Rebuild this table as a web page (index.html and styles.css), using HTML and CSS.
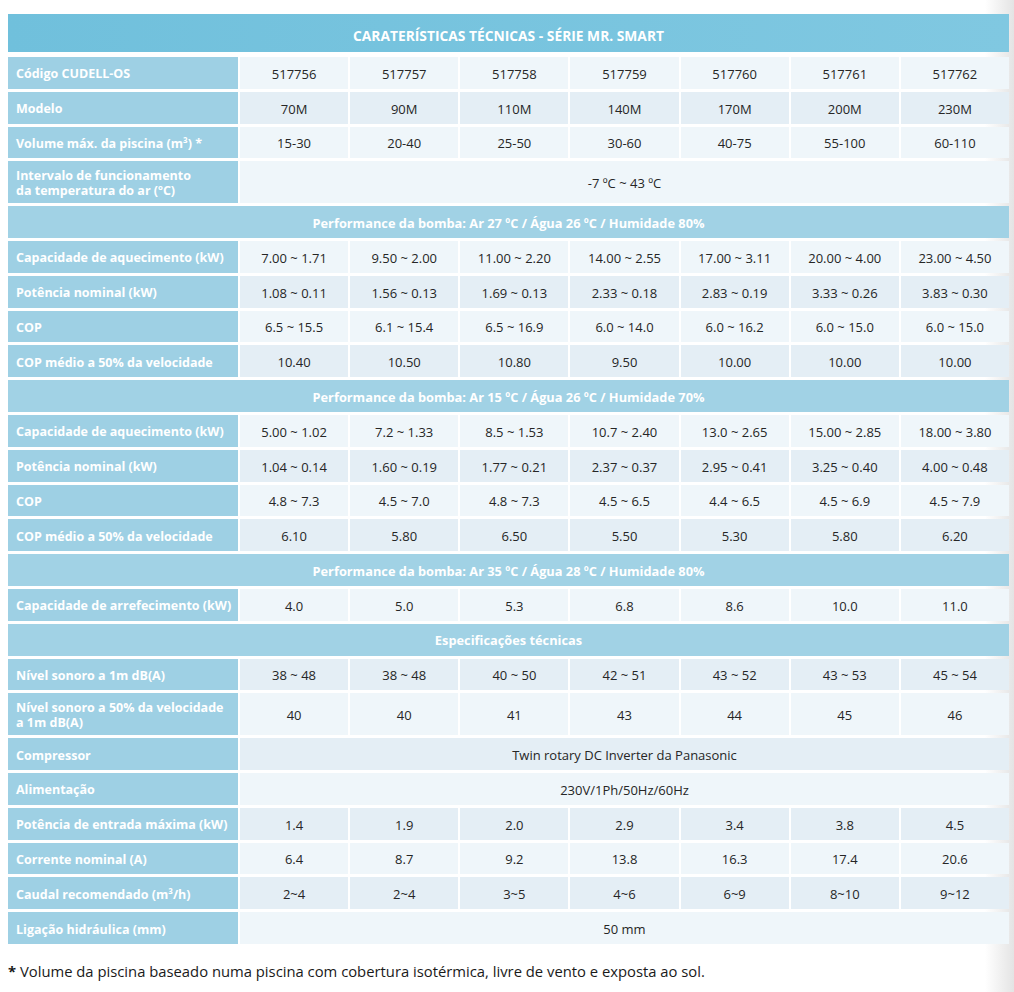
FILE: index.html
```html
<!DOCTYPE html>
<html lang="pt">
<head>
    <meta charset="UTF-8">
    <title>Caraterísticas técnicas - Série Mr. Smart</title>
    <link rel="stylesheet" href="styles.css">
</head>
<body>
    <div class="sheet">
        <div class="title">CARATERÍSTICAS TÉCNICAS - SÉRIE MR. SMART</div>
        <table class="specs">
            <tr class="lt"><th>Código CUDELL-OS</th><td>517756</td><td>517757</td><td>517758</td><td>517759</td><td>517760</td><td>517761</td><td>517762</td></tr>
            <tr class="dk"><th>Modelo</th><td>70M</td><td>90M</td><td>110M</td><td>140M</td><td>170M</td><td>200M</td><td>230M</td></tr>
            <tr class="lt"><th>Volume máx. da piscina (m³) *</th><td>15-30</td><td>20-40</td><td>25-50</td><td>30-60</td><td>40-75</td><td>55-100</td><td>60-110</td></tr>
            <tr class="lt tall"><th>Intervalo de funcionamento<br>da temperatura do ar (ºC)</th><td colspan="7">-7 ºC ~ 43 ºC</td></tr>
            <tr class="section"><th colspan="8">Performance da bomba: Ar 27 ºC / Água 26 ºC / Humidade 80%</th></tr>
            <tr class="lt"><th>Capacidade de aquecimento (kW)</th><td>7.00 ~ 1.71</td><td>9.50 ~ 2.00</td><td>11.00 ~ 2.20</td><td>14.00 ~ 2.55</td><td>17.00 ~ 3.11</td><td>20.00 ~ 4.00</td><td>23.00 ~ 4.50</td></tr>
            <tr class="dk"><th>Potência nominal (kW)</th><td>1.08 ~ 0.11</td><td>1.56 ~ 0.13</td><td>1.69 ~ 0.13</td><td>2.33 ~ 0.18</td><td>2.83 ~ 0.19</td><td>3.33 ~ 0.26</td><td>3.83 ~ 0.30</td></tr>
            <tr class="lt"><th>COP</th><td>6.5 ~ 15.5</td><td>6.1 ~ 15.4</td><td>6.5 ~ 16.9</td><td>6.0 ~ 14.0</td><td>6.0 ~ 16.2</td><td>6.0 ~ 15.0</td><td>6.0 ~ 15.0</td></tr>
            <tr class="dk"><th>COP médio a 50% da velocidade</th><td>10.40</td><td>10.50</td><td>10.80</td><td>9.50</td><td>10.00</td><td>10.00</td><td>10.00</td></tr>
            <tr class="section"><th colspan="8">Performance da bomba: Ar 15 ºC / Água 26 ºC / Humidade 70%</th></tr>
            <tr class="lt"><th>Capacidade de aquecimento (kW)</th><td>5.00 ~ 1.02</td><td>7.2 ~ 1.33</td><td>8.5 ~ 1.53</td><td>10.7 ~ 2.40</td><td>13.0 ~ 2.65</td><td>15.00 ~ 2.85</td><td>18.00 ~ 3.80</td></tr>
            <tr class="dk"><th>Potência nominal (kW)</th><td>1.04 ~ 0.14</td><td>1.60 ~ 0.19</td><td>1.77 ~ 0.21</td><td>2.37 ~ 0.37</td><td>2.95 ~ 0.41</td><td>3.25 ~ 0.40</td><td>4.00 ~ 0.48</td></tr>
            <tr class="lt"><th>COP</th><td>4.8 ~ 7.3</td><td>4.5 ~ 7.0</td><td>4.8 ~ 7.3</td><td>4.5 ~ 6.5</td><td>4.4 ~ 6.5</td><td>4.5 ~ 6.9</td><td>4.5 ~ 7.9</td></tr>
            <tr class="dk"><th>COP médio a 50% da velocidade</th><td>6.10</td><td>5.80</td><td>6.50</td><td>5.50</td><td>5.30</td><td>5.80</td><td>6.20</td></tr>
            <tr class="section"><th colspan="8">Performance da bomba: Ar 35 ºC / Água 28 ºC / Humidade 80%</th></tr>
            <tr class="lt"><th>Capacidade de arrefecimento (kW)</th><td>4.0</td><td>5.0</td><td>5.3</td><td>6.8</td><td>8.6</td><td>10.0</td><td>11.0</td></tr>
            <tr class="section"><th colspan="8">Especificações técnicas</th></tr>
            <tr class="dk"><th>Nível sonoro a 1m dB(A)</th><td>38 ~ 48</td><td>38 ~ 48</td><td>40 ~ 50</td><td>42 ~ 51</td><td>43 ~ 52</td><td>43 ~ 53</td><td>45 ~ 54</td></tr>
            <tr class="lt tall"><th>Nível sonoro a 50% da velocidade<br>a 1m dB(A)</th><td>40</td><td>40</td><td>41</td><td>43</td><td>44</td><td>45</td><td>46</td></tr>
            <tr class="dk"><th>Compressor</th><td colspan="7">Twin rotary DC Inverter da Panasonic</td></tr>
            <tr class="lt"><th>Alimentação</th><td colspan="7">230V/1Ph/50Hz/60Hz</td></tr>
            <tr class="dk"><th>Potência de entrada máxima (kW)</th><td>1.4</td><td>1.9</td><td>2.0</td><td>2.9</td><td>3.4</td><td>3.8</td><td>4.5</td></tr>
            <tr class="lt"><th>Corrente nominal (A)</th><td>6.4</td><td>8.7</td><td>9.2</td><td>13.8</td><td>16.3</td><td>17.4</td><td>20.6</td></tr>
            <tr class="dk"><th>Caudal recomendado (m³/h)</th><td>2~4</td><td>2~4</td><td>3~5</td><td>4~6</td><td>6~9</td><td>8~10</td><td>9~12</td></tr>
            <tr class="lt"><th>Ligação hidráulica (mm)</th><td colspan="7">50 mm</td></tr>
        </table>
        <p class="note"><b>*</b> Volume da piscina baseado numa piscina com cobertura isotérmica, livre de vento e exposta ao sol.</p>
    </div>
</body>
</html>
```

FILE: styles.css
```css
html {
    background: linear-gradient(to right, #fff 0, #fff 985px, #e4e4e4 1014px);
    min-height: 100%;
}
body {
    margin: 0;
    font-family: "Open Sans", "Noto Sans", sans-serif;
    color: #222;
}
.sheet {
    padding: 14px 0 0 6px;
    width: 1005px;
}
.title {
    margin: 0 2px;
    height: 38px;
    line-height: 44px;
    background: linear-gradient(to right, #70c0dc, #80c8e1);
    color: #fff;
    font-weight: 700;
    font-size: 13.8px;
    text-align: center;
}
.specs {
    width: 1005px;
    border-collapse: separate;
    border-spacing: 2px 3px;
    margin-top: 2px;
    table-layout: fixed;
    font-size: 13px;
}
.specs th,
.specs td {
    height: 31.8px;
    padding: 2px 0 0;
    box-sizing: border-box;
    vertical-align: middle;
}
.specs tr.tall th,
.specs tr.tall td {
    height: 41.8px;
}
.specs th {
    width: 230px;
    background: #9ed0e4;
    color: #fff;
    font-weight: 700;
    text-align: left;
    padding-left: 8px;
    line-height: 15px;
    font-size: 12.5px;
    white-space: nowrap;
}
.specs td {
    text-align: center;
    color: #262626;
}
.specs tr.lt td {
    background: #eff6fa;
}
.specs tr.dk td {
    background: #e4eef5;
}
.specs tr.section th {
    text-align: center;
    padding-left: 0;
    background: #a1d2e5;
    font-size: 12.8px;
}
.note {
    margin: 14px 0 0 2px;
    font-size: 14.8px;
    color: #1a1a1a;
}
```
